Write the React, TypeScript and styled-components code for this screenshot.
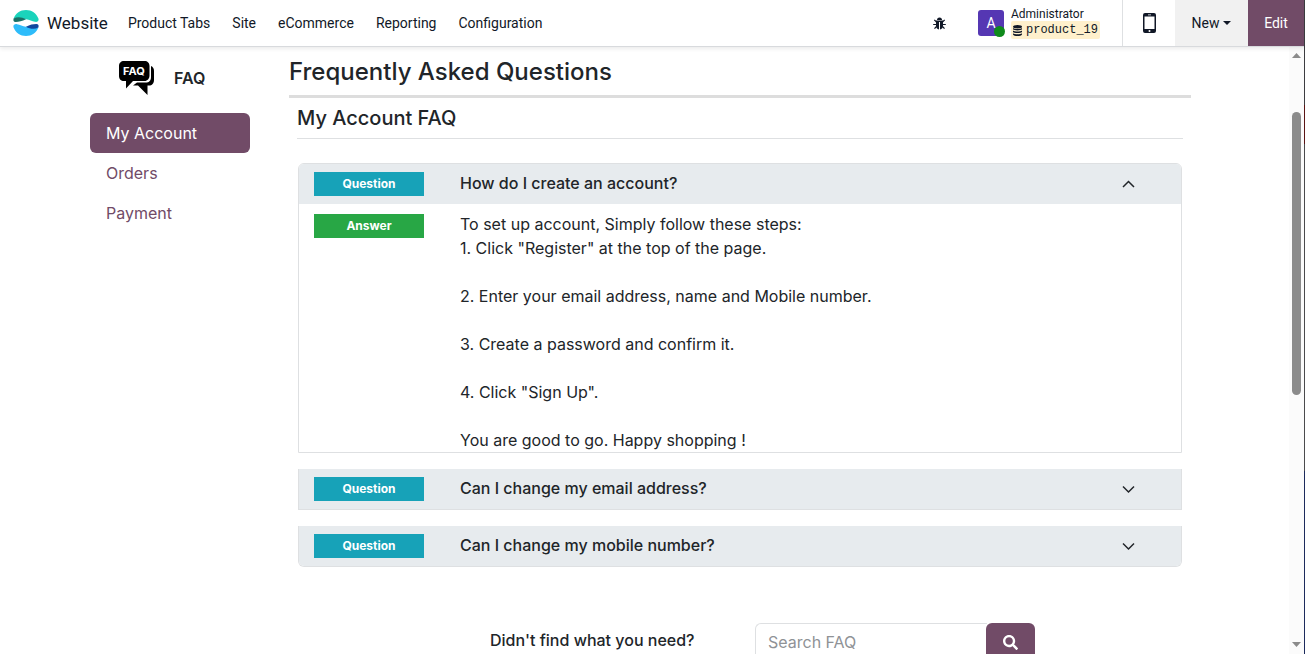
import React, { useState } from 'react';
import styled, { createGlobalStyle } from 'styled-components';
import { FaSearch } from 'react-icons/fa';

const INK = '#212529';
const NAV_INK = '#111827';
const PLUM = '#714b67';
const LINE = '#dee0e2';

const GlobalStyle = createGlobalStyle`
  *, *::before, *::after { box-sizing: border-box; }
  body {
    margin: 0;
    background: #fff;
    color: ${INK};
    font-family: Inter, "Liberation Sans", sans-serif;
    font-size: 16px;
    line-height: 24px;
  }
  h1, h2, h3, p, ul { margin: 0; padding: 0; }
  ul { list-style: none; }
  button { font: inherit; color: inherit; border: 0; background: none; padding: 0; cursor: pointer; }
  a { color: inherit; text-decoration: none; }
`;

const Shell = styled.div`
  display: flex;
  height: 100vh;
  overflow: hidden;
`;

const Desktop = styled.div`
  width: 1px;
  background: linear-gradient(#3c3c40 16%, #5a1414 16% 22%, #4a4a4c 22% 72%, #1c2a5c 72%);
`;

const Page = styled.div`
  flex: 1;
  min-width: 0;
  display: flex;
  flex-direction: column;
`;

const TopBar = styled.header`
  position: relative;
  display: flex;
  flex: none;
  height: 47px;
  border-bottom: 1px solid #d8dadd;
  box-shadow: 0 2px 4px rgba(0, 0, 0, 0.08);
  font-family: Roboto, "Liberation Sans", sans-serif;
  font-size: 14px;
  color: ${NAV_INK};
`;

const Brand = styled.a`
  display: flex;
  align-items: center;
  gap: 8px;
  padding-left: 13px;
  font-size: 17px;
`;

const Menu = styled.nav`
  display: flex;
  align-items: center;
  gap: 22px;
  padding-left: 20px;
`;

const Tools = styled.div`
  display: flex;
  margin-left: auto;
`;

const ToolButton = styled.button<{ $width: number; $tone?: 'grey' | 'plum' }>`
  display: flex;
  align-items: center;
  justify-content: center;
  gap: 4px;
  width: ${(p) => p.$width}px;
  background: ${(p) => (p.$tone === 'plum' ? PLUM : p.$tone === 'grey' ? '#f1f1f1' : 'transparent')};
  color: ${(p) => (p.$tone === 'plum' ? '#fff' : NAV_INK)};
`;

const UserButton = styled.button`
  display: flex;
  align-items: center;
  gap: 7px;
  padding: 0 22px;
  border-right: 1px solid ${LINE};
`;

const Avatar = styled.span`
  position: relative;
  display: grid;
  place-items: center;
  width: 26px;
  height: 26px;
  border-radius: 3px;
  background: #5537b3;
  color: #fff;
  font-size: 14px;
`;

const Status = styled.span`
  position: absolute;
  right: -1px;
  bottom: -1px;
  width: 11px;
  height: 11px;
  border-radius: 50%;
  background: #0f8a1c;
`;

const UserText = styled.span`
  display: flex;
  flex-direction: column;
  align-items: flex-start;
  font-size: 12px;
  line-height: 14px;
`;

const Database = styled.span`
  display: flex;
  align-items: center;
  gap: 4px;
  height: 18px;
  padding: 0 2px;
  border-radius: 2px;
  background: #fff0cc;
  font-family: "Liberation Mono", monospace;
`;

const View = styled.div`
  display: flex;
  flex: 1;
  min-height: 0;
`;

const Scroller = styled.div`
  flex: 1;
  min-width: 0;
  overflow: hidden;
`;

const Rail = styled.div`
  display: flex;
  flex-direction: column;
  align-items: center;
  width: 15px;
  padding: 6px 0 7px;
  background: #fbfbfb;
`;

const Arrow = styled.svg`
  flex: none;
  display: block;
  fill: #8b8b8b;
`;

const Gap = styled.div<{ $grow: number }>`
  flex: ${(p) => p.$grow} 0 0;
`;

const Thumb = styled.div`
  flex: 283 0 0;
  width: 9px;
  border-radius: 5px;
  background: #8b8b8b;
`;

const Container = styled.div`
  display: flex;
  gap: 39px;
  max-width: 1139px;
  margin: 0 auto;
  padding: 0 15px;
`;

const Sidebar = styled.aside`
  flex: none;
  width: 160px;
  padding-top: 12px;
`;

const SideHead = styled.div`
  display: flex;
  align-items: center;
  gap: 18px;
  height: 38px;
  margin-bottom: 16px;
  padding-left: 28px;
  font-weight: 600;
`;

const SideLink = styled.a<{ $active: boolean }>`
  display: block;
  padding: 8px 16px;
  border-radius: 6px;
  background: ${(p) => (p.$active ? PLUM : 'transparent')};
  color: ${(p) => (p.$active ? '#fff' : PLUM)};
`;

const Main = styled.main`
  flex: 1;
  min-width: 0;
  padding: 10px 8px 0 0;
`;

const Title = styled.h1`
  padding-bottom: 8px;
  border-bottom: 3px solid #dddddd;
  font-size: 24px;
  line-height: 30px;
  font-weight: 500;
`;

const Section = styled.section`
  padding: 8px 8px 0;
`;

const Subtitle = styled.h2`
  padding-bottom: 8px;
  border-bottom: 1px solid ${LINE};
  font-size: 20px;
  line-height: 24px;
  font-weight: 500;
`;

const List = styled.div`
  display: flex;
  flex-direction: column;
  gap: 16px;
  margin: 24px 1px 0;
`;

const Item = styled.article`
  border: 1px solid ${LINE};
  border-top-width: 0;
  overflow: hidden;
  &:first-child { border-top-width: 1px; border-radius: 6px 6px 0 0; }
  &:last-child { border-radius: 0 0 6px 6px; }
`;

const ItemHead = styled.button`
  display: flex;
  align-items: center;
  gap: 36px;
  width: 100%;
  height: 40px;
  padding: 0 46px 0 15px;
  background: #e7ebee;
  text-align: left;
`;

const ItemTitle = styled.span`
  flex: 1;
  padding-bottom: 2px;
  font-weight: 500;
`;

const Tag = styled.span<{ $answer?: boolean }>`
  flex: none;
  width: 110px;
  background: ${(p) => (p.$answer ? '#28a745' : '#17a2b8')};
  color: #fff;
  font-size: 12px;
  font-weight: 700;
  text-align: center;
`;

const ItemBody = styled.div`
  display: flex;
  align-items: flex-start;
  gap: 36px;
  padding: 8px 15px 0;
  ${Tag} { margin-top: 2px; }
`;

const Steps = styled.p`
  white-space: pre-line;
`;

const SearchForm = styled.form`
  display: flex;
  padding: 56px 0 0 193px;
`;

const SearchLabel = styled.label`
  flex: none;
  width: 265px;
  padding-top: 5px;
  font-weight: 500;
`;

const SearchInput = styled.input`
  width: 232px;
  height: 38px;
  padding: 0 12px;
  border: 1px solid ${LINE};
  border-right: 0;
  border-radius: 6px 0 0 6px;
  font: inherit;
  &::placeholder { color: #8f9296; opacity: 1; }
`;

const SearchButton = styled.button`
  display: grid;
  place-items: center;
  width: 49px;
  height: 38px;
  margin-left: -1px;
  border-radius: 6px;
  background: ${PLUM};
  color: #fff;
`;

const Logo = () => (
  <svg width="26" height="26" viewBox="0 0 26 26" aria-hidden="true">
    <path d="M.6 8.500C2.500 3.400 7.300 0 13 0s10.500 3.400 12.400 8.500c.8 2.300-1 3.800-3.400 3.300-3-.6-5.500-2-9-2.500z" fill="#1ad3bb" />
    <path d="M.6 8.500C4.500 6.300 9 7 13 9.300c-4 2-7 2.700-10.400 2.700C.6 12 0 10.500.6 8.500z" fill="#1b6f66" />
    <path d="M25.400 17.500C23.500 22.600 18.700 26 13 26S2.500 22.600.6 17.500c-.8-2.300 1-3.800 3.400-3.300 3 .6 5.500 2 9 2.500z" fill="#2ebcfa" />
    <path d="M25.400 17.500c-3.900 2.200-8.400 1.500-12.400-.8 4-2 7-2.700 10.400-2.700 2 0 2.600 1.500 2 3.500z" fill="#10489e" />
  </svg>
);

const FaqIcon = () => (
  <svg width="38" height="36" viewBox="0 0 38 36" aria-hidden="true">
    <path d="M33 6c2 1 3 2.500 3 5v9c0 3.500-2 5.500-5 5.500h-1.500V35l-9.500-9.500h-5l4-3h8.500c4 0 5.500-2 5.500-5.500z" fill="#000" />
    <path d="M6 1h20.500C29.500 1 31.500 3 31.500 6v9.500c0 3-2 5.500-5 5.500H15l-7 7.500V21H6c-3 0-5-2-5-5V6c0-3 2-5 5-5z" fill="#000" />
    <text x="16" y="15" textAnchor="middle" fontFamily="Inter, sans-serif" fontSize="11" fontWeight="700" fill="#fff">FAQ</text>
  </svg>
);

const BugIcon = () => (
  <svg width="13" height="13" viewBox="0 0 13 13" aria-hidden="true">
    <path d="M4 3a2.500 2.500 0 0 1 5 0z" fill="currentColor" />
    <path d="M3 3.500h7V9a3.500 3.500 0 0 1-3 3.400V5H6v7.400A3.500 3.500 0 0 1 3 9z" fill="currentColor" />
    <path d="M3.500 5L1.300 2.800M9.500 5l2.200-2.200M.2 7.500h3M9.800 7.500h3M3.500 9.500l-2 2.200M9.500 9.500l2 2.200" stroke="currentColor" strokeWidth="1.200" fill="none" />
  </svg>
);

const DatabaseIcon = () => (
  <svg width="9" height="11" viewBox="0 0 9 11" fill="currentColor" aria-hidden="true">
    <ellipse cx="4.500" cy="1.700" rx="4.500" ry="1.700" />
    <path d="M0 3c1.500 1.300 7.500 1.300 9 0v1.300c-1 1.500-8 1.500-9 0zM0 5.600c1.500 1.300 7.500 1.300 9 0v1.300c-1 1.500-8 1.500-9 0zM0 8.200c1.500 1.300 7.500 1.300 9 0v1.200c-1 2-8 2-9 0z" />
  </svg>
);

const PhoneIcon = () => (
  <svg width="13" height="20" viewBox="0 0 13 20" aria-hidden="true">
    <path fillRule="evenodd" d="M2 0h9a2 2 0 0 1 2 2v16a2 2 0 0 1-2 2H2a2 2 0 0 1-2-2V2a2 2 0 0 1 2-2zM1.500 3.500v12.500h10V3.500zM5 1.500v.8h3v-.8zM6.500 17a1 1 0 1 0 0 2 1 1 0 0 0 0-2z" fill="currentColor" />
  </svg>
);

const Chevron = ({ open }: { open: boolean }) => (
  <svg width="14" height="14" viewBox="0 0 14 14" fill="none" stroke={INK} strokeWidth="1.500" aria-hidden="true">
    <path d={open ? 'M2 10l5.500-5.500L13 10' : 'M2 4.500L7.500 10 13 4.500'} />
  </svg>
);

const menu = ['Product Tabs', 'Site', 'eCommerce', 'Reporting', 'Configuration'];
const topics = ['My Account', 'Orders', 'Payment'];
const entries = [
  {
    question: 'How do I create an account?',
    answer:
      'To set up account, Simply follow these steps:\n1. Click "Register" at the top of the page.\n\n2. Enter your email address, name and Mobile number.\n\n3. Create a password and confirm it.\n\n4. Click "Sign Up".\n\nYou are good to go. Happy shopping !',
  },
  { question: 'Can I change my email address?', answer: '' },
  { question: 'Can I change my mobile number?', answer: '' },
];

export default function App() {
  const [open, setOpen] = useState(0);
  return (
    <Shell>
      <GlobalStyle />
      <Page>
        <TopBar>
          <Brand href="#"><Logo />Website</Brand>
          <Menu>{menu.map((m) => <a href="#" key={m}>{m}</a>)}</Menu>
          <Tools>
            <ToolButton $width={32} aria-label="Debug"><BugIcon /></ToolButton>
            <UserButton>
              <Avatar>A<Status /></Avatar>
              <UserText>
                Administrator
                <Database><DatabaseIcon />product_19</Database>
              </UserText>
            </UserButton>
            <ToolButton $width={52} aria-label="Mobile preview"><PhoneIcon /></ToolButton>
            <ToolButton $width={73} $tone="grey">
              New
              <svg width="8" height="4" viewBox="0 0 8 4" aria-hidden="true"><path d="M0 0h8L4 4z" fill="currentColor" /></svg>
            </ToolButton>
            <ToolButton $width={56} $tone="plum">Edit</ToolButton>
          </Tools>
        </TopBar>
        <View>
          <Scroller>
            <Container>
              <Sidebar>
                <SideHead><FaqIcon />FAQ</SideHead>
                <ul>
                  {topics.map((t, i) => (
                    <li key={t}><SideLink href="#" $active={i === 0}>{t}</SideLink></li>
                  ))}
                </ul>
              </Sidebar>
              <Main>
                <Title>Frequently Asked Questions</Title>
                <Section>
                  <Subtitle>My Account FAQ</Subtitle>
                  <List>
                    {entries.map((e, i) => (
                      <Item key={e.question}>
                        <ItemHead aria-expanded={open === i} onClick={() => setOpen(open === i ? -1 : i)}>
                          <Tag>Question</Tag>
                          <ItemTitle>{e.question}</ItemTitle>
                          <Chevron open={open === i} />
                        </ItemHead>
                        {open === i && e.answer && (
                          <ItemBody>
                            <Tag $answer>Answer</Tag>
                            <Steps>{e.answer}</Steps>
                          </ItemBody>
                        )}
                      </Item>
                    ))}
                  </List>
                  <SearchForm>
                    <SearchLabel htmlFor="faq-search">Didn't find what you need?</SearchLabel>
                    <SearchInput id="faq-search" placeholder="Search FAQ" />
                    <SearchButton aria-label="Search"><FaSearch size={15} /></SearchButton>
                  </SearchForm>
                </Section>
              </Main>
            </Container>
          </Scroller>
          <Rail aria-hidden="true">
            <Arrow width="9" height="5" viewBox="0 0 9 5"><path d="M0 5h9L4.500 0z" /></Arrow>
            <Gap $grow={54} />
            <Thumb />
            <Gap $grow={247} />
            <Arrow width="9" height="5" viewBox="0 0 9 5"><path d="M0 0h9L4.500 5z" /></Arrow>
          </Rail>
        </View>
      </Page>
      <Desktop />
    </Shell>
  );
}
